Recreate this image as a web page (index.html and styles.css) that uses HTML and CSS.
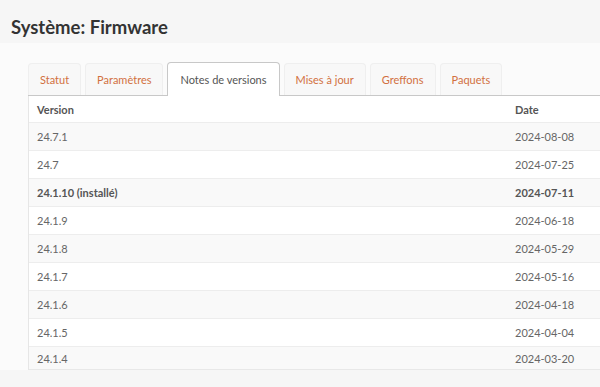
FILE: index.html
```html
<!DOCTYPE html>
<html lang="fr">
<head>
    <meta charset="UTF-8">
    <meta name="viewport" content="width=device-width, initial-scale=1.0">
    <title>Système: Firmware</title>
    <link rel="stylesheet" href="styles.css">
</head>
<body>
    <div class="page-header">
        <h1 class="page-title">Système: Firmware</h1>
    </div>

    <div class="main">
        <ul class="tabs">
            <li class="tab">Statut</li>
            <li class="tab">Paramètres</li>
            <li class="tab active">Notes de versions</li>
            <li class="tab">Mises à jour</li>
            <li class="tab">Greffons</li>
            <li class="tab">Paquets</li>
        </ul>

        <div class="tab-content">
            <div class="row head">
                <div class="cell">Version</div>
                <div class="cell">Date</div>
            </div>
            <div class="row">
                <div class="cell">24.7.1</div>
                <div class="cell">2024-08-08</div>
            </div>
            <div class="row">
                <div class="cell">24.7</div>
                <div class="cell">2024-07-25</div>
            </div>
            <div class="row installed">
                <div class="cell">24.1.10 (installé)</div>
                <div class="cell">2024-07-11</div>
            </div>
            <div class="row">
                <div class="cell">24.1.9</div>
                <div class="cell">2024-06-18</div>
            </div>
            <div class="row">
                <div class="cell">24.1.8</div>
                <div class="cell">2024-05-29</div>
            </div>
            <div class="row">
                <div class="cell">24.1.7</div>
                <div class="cell">2024-05-16</div>
            </div>
            <div class="row">
                <div class="cell">24.1.6</div>
                <div class="cell">2024-04-18</div>
            </div>
            <div class="row">
                <div class="cell">24.1.5</div>
                <div class="cell">2024-04-04</div>
            </div>
            <div class="row last">
                <div class="cell">24.1.4</div>
                <div class="cell">2024-03-20</div>
            </div>
        </div>
    </div>
</body>
</html>
```

FILE: styles.css
```css
/* Base */
body {
    font-family: Lato, "Open Sans", sans-serif;
    margin: 0;
    padding: 0;
    background-color: #f6f6f6;
    color: #666;
    overflow: hidden;
}

.page-header {
    box-sizing: border-box;
    height: 43px;
    padding: 10px 11px 0;
    display: flex;
    align-items: center;
}

.page-title {
    margin: 0;
    font-size: 18.5px;
    font-weight: bold;
    color: #333;
}

.main {
    background-color: #fbfbfb;
    padding: 19px 0 0 28px;
}

/* Tabs */
.tabs {
    list-style: none;
    margin: 0;
    padding: 0;
    display: flex;
    align-items: flex-end;
    gap: 4px;
    border-bottom: 1px solid #c8c8c8;
}

.tab {
    box-sizing: border-box;
    height: 32px;
    padding: 0 11px;
    display: flex;
    align-items: center;
    font-size: 11px;
    color: #d2703f;
    background-color: #f8f8f8;
    border: 1px solid #efefef;
    border-bottom: none;
    border-radius: 4px 4px 0 0;
}

.tab.active {
    color: #555;
    background-color: #fff;
    border-color: #c8c8c8;
    margin-bottom: -1px;
    height: 34px;
    padding: 0 12px;
}

/* Table */
.tab-content {
    background-color: #fff;
    border-left: 1px solid #e6e6e6;
}

.row {
    box-sizing: border-box;
    display: grid;
    grid-template-columns: 1fr 93px;
    height: 28px;
    align-items: center;
    border-bottom: 1px solid #ededed;
    font-size: 11px;
}

.row:nth-child(even) {
    background-color: #f9f9f9;
}

.row.head {
    height: 27px;
    font-weight: bold;
    color: #555;
    background-color: #fff;
}

.row.installed {
    font-weight: bold;
    color: #555;
}

.row.last {
    height: 23px;
    border-bottom-color: #e8e8e8;
}

.cell {
    padding-left: 8px;
}
```
